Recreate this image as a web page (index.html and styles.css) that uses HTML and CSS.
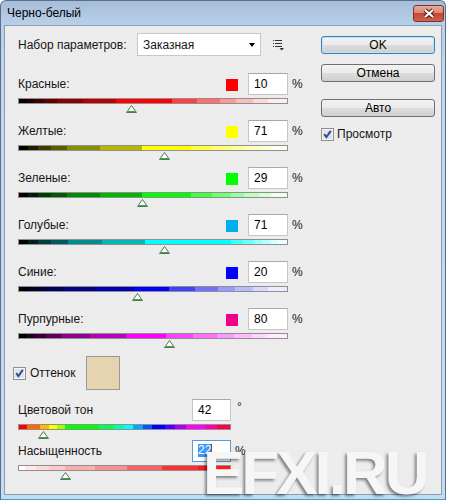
FILE: index.html
```html
<!DOCTYPE html>
<html lang="ru">
<head>
    <meta charset="UTF-8">
    <title>Черно-белый</title>
    <link rel="stylesheet" href="styles.css">
</head>
<body>
<div class="window">
    <div class="titlebar">
        <span class="title">Черно-белый</span>
        <div class="close">
            <svg width="14" height="11" viewBox="0 0 14 11"><path d="M3 2 L11 9 M11 2 L3 9" stroke="#4a1a14" stroke-width="4.2"/><path d="M3 2 L11 9 M11 2 L3 9" stroke="#fff" stroke-width="2.2"/></svg>
        </div>
    </div>
    <div class="client">
        <div class="main">
            <div class="preset">
                <span class="preset-label">Набор параметров:</span>
                <div class="select"><span>Заказная</span><i class="arrow"></i></div>
                <svg class="menu-icon" width="12" height="12" viewBox="0 0 12 12"><g fill="#333"><rect x="0" y="0" width="1" height="1"/><rect x="2" y="0" width="7" height="1"/><rect x="0" y="3" width="1" height="1"/><rect x="2" y="3" width="7" height="1"/><rect x="0" y="6" width="1" height="1"/><rect x="2" y="6" width="7" height="1"/><path d="M6.5 8 H11 L8.75 10.5 Z"/></g></svg>
            </div>

            <div class="chan red">
                <div class="head"><span class="name">Красные:</span><i class="swatch"></i><div class="num">10</div></div>
                <span class="unit">%</span>
                <div class="bar"></div>
                <div class="track"><svg class="thumb" style="left:42%" width="11" height="8" viewBox="0 0 11 8"><path d="M5.5 0.5 L10.5 7.5 H0.5 Z" fill="#fff" stroke="#55705a"/><path d="M2 6 H9 L10 7.2 H1 Z" fill="#3ea23e"/></svg></div>
            </div>

            <div class="chan yellow">
                <div class="head"><span class="name">Желтые:</span><i class="swatch"></i><div class="num">71</div></div>
                <span class="unit">%</span>
                <div class="bar"></div>
                <div class="track"><svg class="thumb" style="left:54.2%" width="11" height="8" viewBox="0 0 11 8"><path d="M5.5 0.5 L10.5 7.5 H0.5 Z" fill="#fff" stroke="#55705a"/><path d="M2 6 H9 L10 7.2 H1 Z" fill="#3ea23e"/></svg></div>
            </div>

            <div class="chan green">
                <div class="head"><span class="name">Зеленые:</span><i class="swatch"></i><div class="num">29</div></div>
                <span class="unit">%</span>
                <div class="bar"></div>
                <div class="track"><svg class="thumb" style="left:45.8%" width="11" height="8" viewBox="0 0 11 8"><path d="M5.5 0.5 L10.5 7.5 H0.5 Z" fill="#fff" stroke="#55705a"/><path d="M2 6 H9 L10 7.2 H1 Z" fill="#3ea23e"/></svg></div>
            </div>

            <div class="chan cyan">
                <div class="head"><span class="name">Голубые:</span><i class="swatch"></i><div class="num">71</div></div>
                <span class="unit">%</span>
                <div class="bar"></div>
                <div class="track"><svg class="thumb" style="left:54.2%" width="11" height="8" viewBox="0 0 11 8"><path d="M5.5 0.5 L10.5 7.5 H0.5 Z" fill="#fff" stroke="#55705a"/><path d="M2 6 H9 L10 7.2 H1 Z" fill="#3ea23e"/></svg></div>
            </div>

            <div class="chan blue">
                <div class="head"><span class="name">Синие:</span><i class="swatch"></i><div class="num">20</div></div>
                <span class="unit">%</span>
                <div class="bar"></div>
                <div class="track"><svg class="thumb" style="left:44%" width="11" height="8" viewBox="0 0 11 8"><path d="M5.5 0.5 L10.5 7.5 H0.5 Z" fill="#fff" stroke="#55705a"/><path d="M2 6 H9 L10 7.2 H1 Z" fill="#3ea23e"/></svg></div>
            </div>

            <div class="chan magenta">
                <div class="head"><span class="name">Пурпурные:</span><i class="swatch"></i><div class="num">80</div></div>
                <span class="unit">%</span>
                <div class="bar"></div>
                <div class="track"><svg class="thumb" style="left:56%" width="11" height="8" viewBox="0 0 11 8"><path d="M5.5 0.5 L10.5 7.5 H0.5 Z" fill="#fff" stroke="#55705a"/><path d="M2 6 H9 L10 7.2 H1 Z" fill="#3ea23e"/></svg></div>
            </div>

            <div class="tint">
                <svg class="check" width="13" height="13" viewBox="0 0 13 13"><rect x="0.5" y="0.5" width="12" height="12" fill="#f6f6f6" stroke="#8e8f8f"/><rect x="2" y="2" width="9" height="9" fill="#e2e2e2"/><path d="M3.2 6.2 L5.4 9 L9.8 2.8" fill="none" stroke="#2d4d9c" stroke-width="2"/></svg>
                <span class="tint-label">Оттенок</span>
                <i class="tint-swatch"></i>
            </div>

            <div class="hs">
                <div class="head"><span class="name">Цветовой тон</span><div class="num">42</div></div>
                <span class="unit deg">°</span>
                <div class="bar hue"></div>
                <div class="track"><svg class="thumb" style="left:11.7%" width="11" height="8" viewBox="0 0 11 8"><path d="M5.5 0.5 L10.5 7.5 H0.5 Z" fill="#fff" stroke="#55705a"/><path d="M2 6 H9 L10 7.2 H1 Z" fill="#3ea23e"/></svg></div>
            </div>

            <div class="hs sat-row">
                <div class="head"><span class="name">Насыщенность</span><div class="num focus"><span class="sel">22</span><i class="caret"></i></div></div>
                <span class="unit">%</span>
                <div class="bar sat"></div>
                <div class="track"><svg class="thumb" style="left:22%" width="11" height="8" viewBox="0 0 11 8"><path d="M5.5 0.5 L10.5 7.5 H0.5 Z" fill="#fff" stroke="#55705a"/><path d="M2 6 H9 L10 7.2 H1 Z" fill="#3ea23e"/></svg></div>
            </div>
        </div>

        <div class="side">
            <div class="btn default">OK</div>
            <div class="btn">Отмена</div>
            <div class="btn auto">Авто</div>
            <div class="preview">
                <svg class="check" width="13" height="13" viewBox="0 0 13 13"><rect x="0.5" y="0.5" width="12" height="12" fill="#f6f6f6" stroke="#8e8f8f"/><rect x="2" y="2" width="9" height="9" fill="#e2e2e2"/><path d="M3.2 6.2 L5.4 9 L9.8 2.8" fill="none" stroke="#2d4d9c" stroke-width="2"/></svg>
                <span>Просмотр</span>
            </div>
        </div>
    </div>
</div>
<div class="watermark">EFXI.RU</div>
</body>
</html>
```

FILE: styles.css
```css
*{
    margin: 0;
    padding: 0;
    box-sizing: border-box;
}
body{
    background: #fff;
    font-family: "Liberation Sans", Arial, sans-serif;
    font-size: 12px;
    color: #161616;
}
.window{
    width: 446px;
    height: 500px;
    border: 1px solid #5a6f8c;
    border-bottom-color: #3aa0cc;
    border-radius: 6px 6px 0 0;
    background: linear-gradient(#a6bdd8, #b9d0ea 24px, #c2d7ed 80px, #c6dbf0);
    display: flex;
    flex-direction: column;
}
.titlebar{
    height: 24px;
    display: flex;
    align-items: flex-start;
}
.title{
    padding: 5px 0 0 6px;
    font-size: 12px;
    color: #000;
}
.close{
    margin: 4px 1px 0 auto;
    width: 31px;
    height: 17px;
    border: 1px solid #7a3328;
    border-radius: 3px;
    background: linear-gradient(#eaa89b, #dd8676 45%, #c74532 50%, #d0604c);
    display: flex;
    align-items: center;
    justify-content: center;
}
.client{
    flex: 1;
    margin: 0 3px 4px;
    border: 1px solid #8a9db6;
    background: #ececec;
    display: flex;
    padding: 7px 0 0 13px;
}
.main{
    width: 290px;
}
.preset{
    height: 23px;
    display: flex;
    align-items: center;
}
.preset-label{
    width: 119px;
}
.select{
    width: 124px;
    height: 23px;
    background: #fff;
    border: 1px solid #c8c8c8;
    display: flex;
    align-items: center;
    padding: 0 5px 0 5px;
}
.select span{
    flex: 1;
}
.arrow{
    width: 0;
    height: 0;
    border-top: 4px solid #000;
    border-left: 3.5px solid transparent;
    border-right: 3.5px solid transparent;
}
.menu-icon{
    margin: 2px 0 0 12px;
}

/* каналы */
.chan, .hs{
    display: grid;
    grid-template-columns: 270px 20px;
    margin-top: 7px;
}
.preset + .chan{
    margin-top: 17px;
}
.head{
    height: 22px;
    display: flex;
    align-items: center;
}
.name{
    flex: 1;
}
.swatch{
    width: 12px;
    height: 12px;
    margin: 1px 10px 0 0;
    background: var(--s);
}
.num{
    width: 40px;
    height: 22px;
    background: #fff;
    border: 1px solid #c6c6c6;
    border-top-color: #a8a8a8;
    padding: 3px 0 0 5px;
    color: #000;
}
.unit{
    padding: 4px 0 0 4px;
}
.bar{
    grid-column: 1;
    margin-top: 3px;
    height: 6px;
    border: 1px solid #8f8f8f;
    background: linear-gradient(to right,
        #000 0 calc(var(--a) * 0.069),
        color-mix(in srgb, var(--c) 12%, #000) calc(var(--a) * 0.069) calc(var(--a) * 0.154),
        color-mix(in srgb, var(--c) 24%, #000) calc(var(--a) * 0.154) calc(var(--a) * 0.256),
        color-mix(in srgb, var(--c) 36%, #000) calc(var(--a) * 0.256) calc(var(--a) * 0.39),
        color-mix(in srgb, var(--c) 55%, #000) calc(var(--a) * 0.39) calc(var(--a) * 0.66),
        color-mix(in srgb, var(--c) 72%, #000) calc(var(--a) * 0.66) var(--a),
        var(--c) var(--a) var(--b),
        color-mix(in srgb, var(--c) 75%, #fff) var(--b) calc(var(--b) + (100% - var(--b)) * 0.219),
        color-mix(in srgb, var(--c) 56%, #fff) calc(var(--b) + (100% - var(--b)) * 0.219) calc(var(--b) + (100% - var(--b)) * 0.419),
        color-mix(in srgb, var(--c) 40%, #fff) calc(var(--b) + (100% - var(--b)) * 0.419) calc(var(--b) + (100% - var(--b)) * 0.558),
        color-mix(in srgb, var(--c) 27%, #fff) calc(var(--b) + (100% - var(--b)) * 0.558) calc(var(--b) + (100% - var(--b)) * 0.709),
        color-mix(in srgb, var(--c) 16%, #fff) calc(var(--b) + (100% - var(--b)) * 0.709) calc(var(--b) + (100% - var(--b)) * 0.837),
        color-mix(in srgb, var(--c) 7%, #fff) calc(var(--b) + (100% - var(--b)) * 0.837) 100%);
}
.track{
    grid-column: 1;
    height: 9px;
    position: relative;
}
.thumb{
    position: absolute;
    top: 1px;
    margin-left: -5px;
}
.red{ --s: #ff0000; --c: #ff0000; --a: 36.3%; --b: 57%; }
.yellow{ --s: #ffff00; --c: #ffff00; --a: 46%; --b: 64%; }
.green{ --s: #00ff00; --c: #00ff00; --a: 46%; --b: 64%; }
.cyan{ --s: #00aeef; --c: #00ffff; --a: 47%; --b: 79%; }
.blue{ --s: #0000ff; --c: #0000ff; --a: 43%; --b: 56%; }
.magenta{ --s: #f0008c; --c: #ff00ff; --a: 40%; --b: 55%; }

/* оттенок */
.tint{
    margin-top: 8px;
    display: flex;
    align-items: center;
    height: 34px;
}
.tint .check{
    margin-left: -5px;
}
.tint-label{
    margin-left: 4px;
}
.tint-swatch{
    margin-left: 11px;
    width: 34px;
    height: 34px;
    background: #e6d3b0;
    border: 1px solid #999;
}
.hs{
    grid-template-columns: 213px 20px;
    margin-top: 9px;
}
.sat-row{
    margin-top: 1px;
}
.hs .num{
    width: 39px;
}
.deg{
    padding: 1px 0 0 6px;
}
.num.focus{
    border-color: #5a9ad6;
    display: flex;
    align-items: flex-start;
    padding-top: 3px;
}
.sel{
    background: #3399ff;
    color: #fff;
    height: 13px;
    line-height: 13px;
}
.caret{
    width: 1px;
    height: 13px;
    background: #8a4a1a;
}
.bar.hue{
    background: linear-gradient(to right,
        #ff0000 0 4%, #ff6a00 4% 10%, #ffbb00 10% 14%, #ffff00 14% 18%,
        #a0ff00 18% 22%, #00ff00 22% 38%, #00ff55 38% 45%, #00ffaa 45% 50%,
        #00ffff 50% 54%, #00aaff 54% 59%, #0055ff 59% 63%, #0000ff 63% 69%,
        #5500ff 69% 74%, #aa00ff 74% 79%, #ff00ff 79% 88%, #ff00aa 88% 94%,
        #ff0044 94% 100%);
}
.bar.sat{
    background: linear-gradient(to right,
        #ffffff 0 3%, #fdeaea 3% 8%, #fcdada 8% 14%, #fccaca 14% 22%,
        #faafaf 22% 36%, #f59393 36% 51%, #f76464 51% 68%, #ff3030 68% 85%,
        #ff1a1a 85% 100%);
}

/* кнопки */
.side{
    width: 114px;
    margin-left: 13px;
    padding-top: 3px;
}
.btn{
    height: 18px;
    border: 1px solid #707070;
    border-radius: 3px;
    background: linear-gradient(#f2f2f2, #ebebeb 50%, #dddddd 50%, #cfcfcf);
    text-align: center;
    line-height: 16px;
    color: #000;
    margin-bottom: 10px;
}
.btn.default{
    border-color: #3c7fb1;
    box-shadow: inset 0 0 0 1px #bfe3f7;
}
.btn.auto{
    margin-top: 17px;
}
.preview{
    margin-top: 6px;
    display: flex;
    align-items: center;
}
.preview span{
    margin-left: 3px;
}

.watermark{
    position: absolute;
    left: 203px;
    top: 442px;
    font: bold 62px/62px "Liberation Sans", Arial, sans-serif;
    letter-spacing: -3px;
    color: #f6f6f6;
    text-shadow: -2px 2px 3px rgba(0,0,0,0.45);
}
```
